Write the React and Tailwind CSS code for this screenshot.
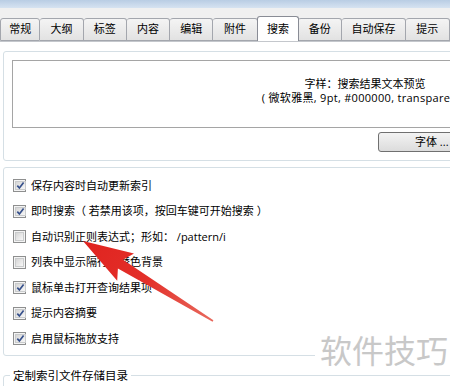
import React from 'react';

const tabs = [
  { name: '常规', w: 42 },
  { name: '大纲', w: 45 },
  { name: '标签', w: 45 },
  { name: '内容', w: 45 },
  { name: '编辑', w: 45 },
  { name: '附件', w: 46 },
  { name: '搜索', w: 44, active: true },
  { name: '备份', w: 46 },
  { name: '自动保存', w: 66 },
  { name: '提示', w: 46 },
];

const options = [
  { label: '保存内容时自动更新索引', checked: true },
  { label: '即时搜索（ 若禁用该项，按回车键可开始搜索 ）', checked: true },
  { label: '自动识别正则表达式；形如： /pattern/i', checked: false },
  { label: '列表中显示隔行交替色背景', checked: false },
  { label: '鼠标单击打开查询结果项', checked: true },
  { label: '提示内容摘要', checked: true },
  { label: '启用鼠标拖放支持', checked: true },
];

const CheckBox = ({ checked }) => (
  <span className="w-[13px] h-[13px] shrink-0 border border-[#8e8f8f] bg-[#f4f4f4] p-[1px] flex">
    <span className="flex-1 flex items-center justify-center border border-[#c9cbcc] bg-gradient-to-br from-[#d6d6d6] to-[#f7f7f7]">
      {checked && (
        <svg width="9" height="9" viewBox="0 0 9 9">
          <path d="M1.3 4.6 L3.4 7 L7.6 1.6" fill="none" stroke="#36508b" strokeWidth="1.7" />
        </svg>
      )}
    </span>
  </span>
);

const Tab = ({ name, w, active }) => (
  <div
    style={{ width: w }}
    className={
      active
        ? 'h-[25px] -mx-[1px] relative z-10 bg-white border border-b-0 border-[#898c95] rounded-t-[3px] flex items-center justify-center pt-[1px]'
        : 'h-[23px] bg-gradient-to-b from-[#f4f4f4] to-[#e2e2e2] border border-l-0 first:border-l border-[#a3a6ad] rounded-t-[3px] flex items-center justify-center'
    }
  >
    {name}
  </div>
);

export default function App() {
  return (
    <div
      className="w-[450px] h-[386px] overflow-hidden relative bg-white text-[11px] text-black"
      style={{ fontFamily: '"Open Sans", "Noto Sans CJK SC", sans-serif' }}
    >
      {/* title bar remnant */}
      <div className="h-[8px] bg-gradient-to-b from-[#b9cde4] to-[#d6e3f1]" />

      {/* tab strip */}
      <div className="h-[34px] bg-[#f0f0f0] flex items-end whitespace-nowrap border-b border-[#c4c7cc]">
        {tabs.map((t) => (
          <Tab key={t.name} {...t} />
        ))}
      </div>

      {/* panel */}
      <div className="px-[3px] pt-[9px]">
        {/* font preview group */}
        <div className="h-[110px] w-[480px] border border-[#d5dfe5] rounded-[3px] pl-[8px] pt-[8px]">
          <div className="w-[706px] h-[68px] border border-[#a5a5a5] text-center leading-[13px] pt-[16px] whitespace-nowrap">
            <div className="mb-[1px]">字样：搜索结果文本预览</div>
            <div className="tracking-[0.3px]">( 微软雅黑, 9pt, #000000, transparent )</div>
          </div>
          <div className="mt-[4px] ml-[366px] w-[112px] h-[20px] border border-[#707070] rounded-[3px] bg-gradient-to-b from-[#f3f3f3] to-[#dcdcdc] flex items-center pl-[36px] whitespace-nowrap">
            字体 ...
          </div>
        </div>

        {/* options group */}
        <div className="mt-[6px] h-[189px] w-[480px] border border-[#d5dfe5] rounded-[3px] pt-[5px] pl-[9px]">
          {options.map((o) => (
            <div key={o.label} className="h-[25.5px] flex items-center gap-[5px] whitespace-nowrap">
              <CheckBox checked={o.checked} />
              <span>{o.label}</span>
            </div>
          ))}
        </div>

        {/* index directory group */}
        <div className="mt-[19px] h-[40px] w-[480px] border border-[#d5dfe5] rounded-[3px] relative">
          <span className="absolute -top-[9px] left-[6px] bg-white px-[3px] text-[11.5px]">定制索引文件存储目录</span>
        </div>
      </div>

      {/* red annotation arrow */}
      <svg className="absolute inset-0 pointer-events-none" width="450" height="386" viewBox="0 0 450 386">
        <defs>
          <linearGradient id="arw" x1="213" y1="321" x2="83" y2="241" gradientUnits="userSpaceOnUse">
            <stop offset="0" stopColor="#e86a5e" />
            <stop offset="0.5" stopColor="#e3302a" />
            <stop offset="1" stopColor="#e0231f" />
          </linearGradient>
        </defs>
        <polygon
          points="83,241 134,253.6 123.1,259.8 213.4,320.3 212.6,321.7 117.9,268.4 117.2,280.8"
          fill="url(#arw)"
        />
      </svg>

      {/* watermark */}
      <div className="absolute left-[315px] top-[333px] w-[135px] h-[42px] bg-white pl-[5px] text-[32px] leading-[36px] text-[#c8c8c8] whitespace-nowrap">
        软件技巧
      </div>
    </div>
  );
}
